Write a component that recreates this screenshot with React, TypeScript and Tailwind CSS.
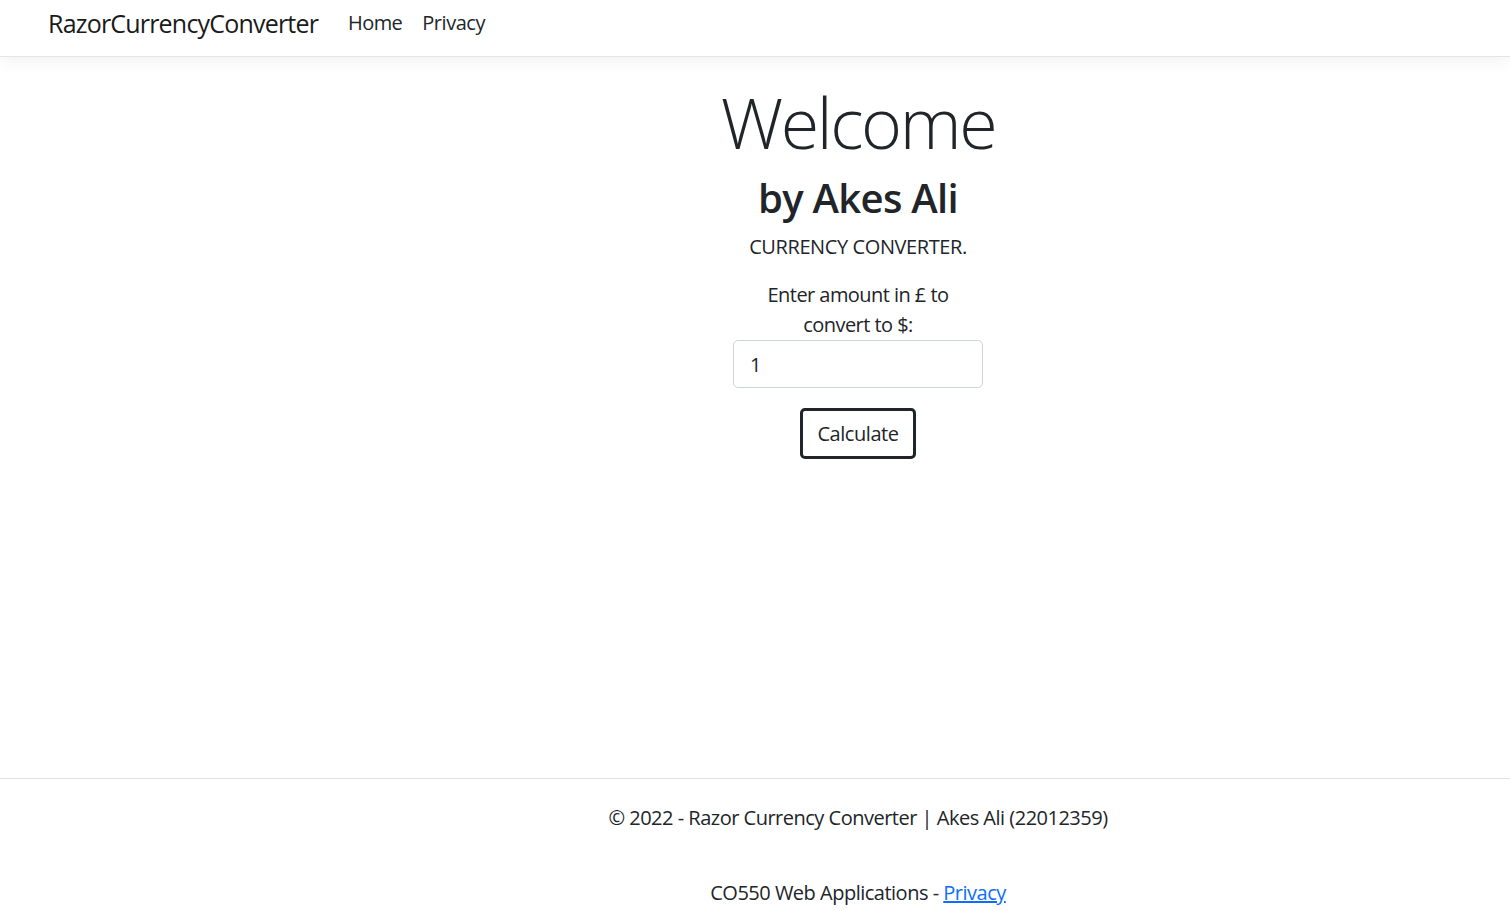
import React from "react";

export default function App() {
  const font = { fontFamily: '"Open Sans", "Noto Sans", "Liberation Sans", sans-serif' };
  return (
    <div className="min-h-screen bg-white text-[#212529]" style={font}>
      <header className="h-[57px] border-b border-[#e5e5e5] bg-white shadow-[0_5px_15px_rgba(0,0,0,0.05)]">
        <nav className="flex items-center pl-[48px] pt-[8px]">
          <span className="mr-[20px] text-[25px] leading-[30px] tracking-[-0.8px] text-[#1a1a1a]">RazorCurrencyConverter</span>
          <a className="px-[10px] text-[20px] leading-[30px] tracking-[-0.6px] text-[#212529]">Home</a>
          <a className="px-[10px] text-[20px] leading-[30px] tracking-[-0.45px] text-[#212529]">Privacy</a>
        </nav>
      </header>
      <main className="h-[721px] pl-[206px] pt-[23px] text-center">
        <h1 className="mb-[10px] text-[70px] font-light leading-[84px] tracking-[-2.4px]">Welcome</h1>
        <h2 className="mb-[10px] text-[40px] font-semibold leading-[48px] tracking-[-0.7px]">by Akes Ali</h2>
        <p className="mb-[18px] text-[20px] leading-[30px] tracking-[-0.4px]">CURRENCY CONVERTER.</p>
        <form className="flex flex-col items-center">
          <div className="w-[250px] text-[20px] leading-[30px] tracking-[-0.55px]">
            <label>
              Enter amount in £ to
              <br />
              convert to $:
            </label>
            <input
              type="text"
              defaultValue="1"
              className="mt-0 block h-[48px] w-[250px] rounded-[5px] border border-[#ced4da] bg-white px-[16px] text-[20px] text-[#212529] outline-none"
            />
          </div>
          <button
            type="button"
            className="mt-[20px] h-[51px] w-[116px] rounded-[5px] border-[3px] border-[#212529] bg-white text-[20px] leading-[30px] tracking-[-0.45px] text-[#212529]"
          >
            Calculate
          </button>
        </form>
      </main>
      <footer className="border-t border-[#dee2e6] pl-[206px] pt-[1px] text-center text-[20px] leading-[75px] tracking-[-0.5px] text-[#212529]">
        <div>© 2022 - Razor Currency Converter | Akes Ali (22012359)</div>
        <div>
          CO550 Web Applications - <a className="text-[#0d6efd] underline">Privacy</a>
        </div>
      </footer>
    </div>
  );
}
